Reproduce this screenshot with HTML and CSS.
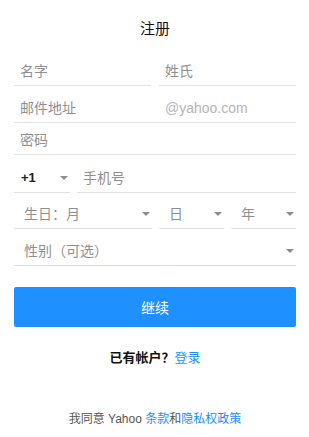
FILE: index.html
```html
<!DOCTYPE html>
<html lang="zh-CN">
<head>
    <meta charset="UTF-8">
    <meta name="viewport" content="width=device-width, initial-scale=1.0">
    <title>注册</title>
    <link rel="stylesheet" href="styles.css">
</head>
<body>
    <div class="signup">
        <h1 class="title">注册</h1>

        <div class="row">
            <div class="field"><span class="hint">名字</span></div>
            <div class="field"><span class="hint">姓氏</span></div>
        </div>
        <div class="row row-email">
            <div class="field email">
                <span class="hint email-name">邮件地址</span>
                <span class="suffix">@yahoo.com</span>
            </div>
        </div>
        <div class="row row-password">
            <div class="field"><span class="hint">密码</span></div>
        </div>
        <div class="row row-phone">
            <div class="field select code">
                <span class="code-value">+1</span>
                <span class="arrow"></span>
            </div>
            <div class="field"><span class="hint">手机号</span></div>
        </div>
        <div class="row row-birth">
            <div class="field select month">
                <span class="hint">生日：月</span>
                <span class="arrow"></span>
            </div>
            <div class="field select">
                <span class="hint">日</span>
                <span class="arrow"></span>
            </div>
            <div class="field select">
                <span class="hint">年</span>
                <span class="arrow"></span>
            </div>
        </div>
        <div class="row row-gender">
            <div class="field select">
                <span class="hint">性别（可选）</span>
                <span class="arrow"></span>
            </div>
        </div>

        <button class="continue-btn">继续</button>

        <p class="login">已有帐户？<a href="#">登录</a></p>

        <p class="terms">我同意 Yahoo <a href="#">条款</a>和<a href="#">隐私权政策</a></p>
    </div>
</body>
</html>
```

FILE: styles.css
```css
body {
    margin: 0;
    background: #fff;
    font-family: "Liberation Sans", "Noto Sans CJK SC", sans-serif;
    color: #222;
}

.signup {
    padding: 0 13px 0 14px;
}

.title {
    margin: 0;
    padding-top: 19px;
    height: 50px;
    box-sizing: border-box;
    font-size: 15px;
    line-height: 20px;
    font-weight: normal;
    text-align: center;
    color: #111;
}

.row {
    display: flex;
    gap: 8px;
    height: 36px;
}

.row-email,
.row-gender {
    height: 37px;
}

.row-password {
    height: 32px;
}

.row-phone {
    height: 38px;
    gap: 7px;
}

.row-birth {
    gap: 7px;
}

.field {
    flex: 1;
    box-sizing: border-box;
    padding: 0 6px 5px;
    display: flex;
    align-items: flex-end;
    border-bottom: 1px solid #e1e1e1;
    font-size: 14px;
    line-height: 18px;
}

.hint {
    color: #8f8f8f;
}

.email-name {
    width: 145px;
}

.suffix {
    color: #b5b5b5;
}

.code {
    flex: none;
    width: 56px;
}

.code-value {
    font-size: 13px;
    font-weight: bold;
    color: #222;
}

.select {
    justify-content: space-between;
    padding-left: 10px;
    padding-right: 2px;
}

.code.select {
    padding-left: 7px;
}

.month {
    flex: none;
    width: 138px;
}

.arrow {
    width: 0;
    height: 0;
    margin-bottom: 7px;
    border-left: 4px solid transparent;
    border-right: 4px solid transparent;
    border-top: 4px solid #8c8c8c;
}

.continue-btn {
    display: block;
    width: 100%;
    height: 40px;
    margin-top: 21px;
    border: none;
    border-radius: 2px;
    background: #1e90ff;
    color: #fff;
    font-family: inherit;
    font-size: 14px;
}

.login {
    margin: 22px 0 0;
    text-align: center;
    font-size: 13px;
    font-weight: bold;
    line-height: 18px;
    color: #111;
}

.login a,
.terms a {
    color: #188fff;
    text-decoration: none;
}

.login a {
    font-weight: normal;
}

.terms {
    margin: 43px 0 0;
    text-align: center;
    font-size: 12px;
    line-height: 18px;
    color: #555;
}
```
